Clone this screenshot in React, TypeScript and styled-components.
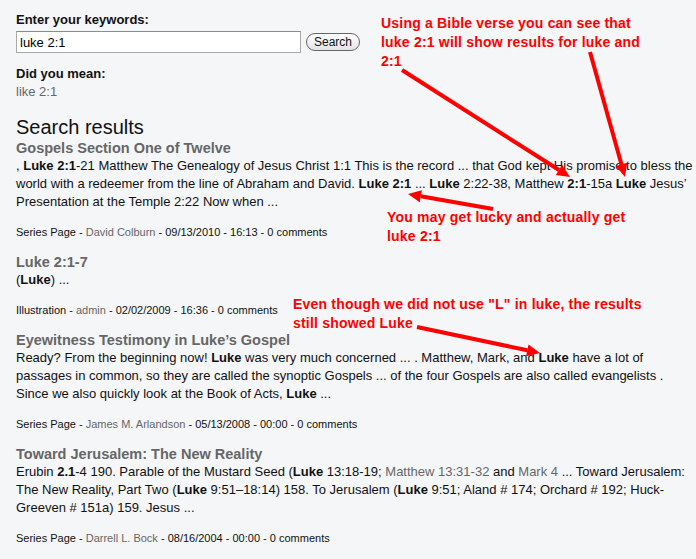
import React from 'react';
import styled, { createGlobalStyle } from 'styled-components';

const GlobalStyle = createGlobalStyle`
    html, body {
        margin: 0;
        padding: 0;
        background: #f5f6f8;
        overflow: hidden;
    }
    body {
        font-family: "Liberation Sans", Arial, Helvetica, sans-serif;
        color: #111;
    }
`;

const Page = styled.div`
    position: relative;
    width: 696px;
    height: 559px;
    padding: 12px 0 0 16px;
    box-sizing: border-box;
    overflow: hidden;
`;
const Label = styled.div`
    font-size: 13px;
    font-weight: bold;
    line-height: 16px;
`;
const SearchRow = styled.div`
    display: flex;
    align-items: center;
    gap: 5px;
    margin-top: 3px;
`;
const Input = styled.input`
    width: 285px;
    height: 22px;
    box-sizing: border-box;
    border: 1px solid #a9a9a9;
    border-top-color: #8c8c8c;
    background: #fff;
    font-family: "Liberation Sans", Arial, sans-serif;
    font-size: 13px;
    padding: 1px 3px;
    color: #000;
    outline: none;
`;
const Button = styled.button`
    height: 18px;
    padding: 0 7px;
    border: 1px solid #666;
    border-radius: 9px;
    background: linear-gradient(#ffffff, #e4e4e4);
    font-family: "Liberation Sans", Arial, sans-serif;
    font-size: 12px;
    line-height: 14px;
    color: #111;
`;
const Suggest = styled.div`
    margin-top: 13px;
`;
const Muted = styled.a`
    color: #666;
    text-decoration: none;
`;
const SuggestLink = styled(Muted)`
    display: block;
    font-size: 13px;
    line-height: 16px;
    margin-top: 2px;
`;
const Heading = styled.h2`
    margin: 16px 0 0;
    font-size: 20px;
    font-weight: normal;
    line-height: 23px;
    color: #111;
`;
const Result = styled.div`
    & + & {
        margin-top: 14px;
    }
`;
const Title = styled.div`
    font-size: 14.5px;
    font-weight: bold;
    line-height: 18px;
    color: #666;
`;
const Body = styled.div`
    font-size: 13px;
    line-height: 18.2px;
    white-space: nowrap;
`;
const Meta = styled.div`
    margin-top: 13.5px;
    font-size: 11px;
    line-height: 14px;
`;
const Note = styled.div<{ $x: number; $y: number }>`
    position: absolute;
    left: ${(p) => p.$x}px;
    top: ${(p) => p.$y}px;
    color: #ff0000;
    font-size: 14px;
    font-weight: bold;
    line-height: 19px;
    letter-spacing: 0.2px;
    white-space: nowrap;
`;
const Overlay = styled.svg`
    position: absolute;
    left: 0;
    top: 0;
    pointer-events: none;
`;

const B = styled.b``;

interface Item {
    title: string;
    lines: React.ReactNode[];
    kind: string;
    author: string;
    date: string;
}

const results: Item[] = [
    {
        title: 'Gospels Section One of Twelve',
        lines: [
            <>, <B>Luke 2:1</B>-21 Matthew The Genealogy of Jesus Christ 1:1 This is the record ... that God kept His promise to bless the</>,
            <>world with a redeemer from the line of Abraham and David. <B>Luke 2:1</B> ... <B>Luke</B> 2:22-38, Matthew <B>2:1</B>-15a <B>Luke</B> Jesus’</>,
            <>Presentation at the Temple 2:22 Now when ...</>,
        ],
        kind: 'Series Page',
        author: 'David Colburn',
        date: '09/13/2010 - 16:13',
    },
    {
        title: 'Luke 2:1-7',
        lines: [<>(<B>Luke</B>) ...</>],
        kind: 'Illustration',
        author: 'admin',
        date: '02/02/2009 - 16:36',
    },
    {
        title: 'Eyewitness Testimony in Luke’s Gospel',
        lines: [
            <>Ready? From the beginning now! <B>Luke</B> was very much concerned ... . Matthew, Mark, and <B>Luke</B> have a lot of</>,
            <>passages in common, so they are called the synoptic Gospels ... of the four Gospels are also called evangelists .</>,
            <>Since we also quickly look at the Book of Acts, <B>Luke</B> ...</>,
        ],
        kind: 'Series Page',
        author: 'James M. Arlandson',
        date: '05/13/2008 - 00:00',
    },
    {
        title: 'Toward Jerusalem: The New Reality',
        lines: [
            <>Erubin <B>2.1</B>-4 190. Parable of the Mustard Seed (<B>Luke</B> 13:18-19; <Muted>Matthew 13:31-32</Muted> and <Muted>Mark 4</Muted> ... Toward Jerusalem:</>,
            <>The New Reality, Part Two (<B>Luke</B> 9:51–18:14) 158. To Jerusalem (<B>Luke</B> 9:51; Aland # 174; Orchard # 192; Huck-</>,
            <>Greeven # 151a) 159. Jesus ...</>,
        ],
        kind: 'Series Page',
        author: 'Darrell L. Bock',
        date: '08/16/2004 - 00:00',
    },
];

const arrows = [
    { x1: 402, y1: 70, x2: 570, y2: 177 },
    { x1: 590, y1: 52, x2: 625, y2: 177 },
    { x1: 493, y1: 209, x2: 408, y2: 194 },
    { x1: 417, y1: 327, x2: 540, y2: 353 },
];

function Arrow({ x1, y1, x2, y2 }: { x1: number; y1: number; x2: number; y2: number }) {
    const a = Math.atan2(y2 - y1, x2 - x1);
    const len = 13;
    const w = 6;
    const bx = x2 - Math.cos(a) * len;
    const by = y2 - Math.sin(a) * len;
    const px = -Math.sin(a) * w;
    const py = Math.cos(a) * w;
    return (
        <g>
            <line x1={x1} y1={y1} x2={bx} y2={by} stroke="#ff0000" strokeWidth={4} />
            <polygon points={`${x2},${y2} ${bx + px},${by + py} ${bx - px},${by - py}`} fill="#ff0000" />
        </g>
    );
}

export default function App() {
    return (
        <Page>
            <GlobalStyle />
            <Label>Enter your keywords:</Label>
            <SearchRow>
                <Input type="text" defaultValue="luke 2:1" />
                <Button>Search</Button>
            </SearchRow>
            <Suggest>
                <Label>Did you mean:</Label>
                <SuggestLink>like 2:1</SuggestLink>
            </Suggest>
            <Heading>Search results</Heading>
            {results.map((r, i) => (
                <Result key={i}>
                    <Title>{r.title}</Title>
                    <Body>
                        {r.lines.map((l, j) => (
                            <div key={j}>{l}</div>
                        ))}
                    </Body>
                    <Meta>
                        {r.kind} - <Muted>{r.author}</Muted> - {r.date} - 0 comments
                    </Meta>
                </Result>
            ))}
            <Note $x={381} $y={14}>
                Using a Bible verse you can see that
                <br />
                luke 2:1 will show results for luke and
                <br />
                2:1
            </Note>
            <Note $x={387} $y={208}>
                You may get lucky and actually get
                <br />
                luke 2:1
            </Note>
            <Note $x={293} $y={295}>
                Even though we did not use "L" in luke, the results
                <br />
                still showed Luke
            </Note>
            <Overlay width={696} height={559}>
                {arrows.map((a, i) => (
                    <Arrow key={i} {...a} />
                ))}
            </Overlay>
        </Page>
    );
}
